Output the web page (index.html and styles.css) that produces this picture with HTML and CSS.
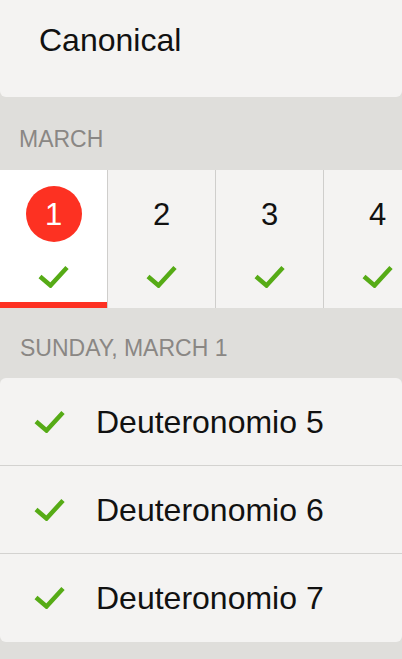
FILE: index.html
```html
<!DOCTYPE html>
<html lang="en">
<head>
    <meta charset="UTF-8">
    <meta name="viewport" content="width=device-width, initial-scale=1.0">
    <title>Reading Plan</title>
    <link rel="stylesheet" href="styles.css">
</head>
<body>
    <div class="plan-title">Canonical</div>

    <div class="section-head">MARCH</div>

    <div class="day-strip">
        <div class="day selected">
            <div class="day-num">1</div>
            <svg class="check" viewBox="0 0 31 23"><path d="M2 11.5 L12.5 20.5 L29 2.5"/></svg>
        </div>
        <div class="day">
            <div class="day-num">2</div>
            <svg class="check" viewBox="0 0 31 23"><path d="M2 11.5 L12.5 20.5 L29 2.5"/></svg>
        </div>
        <div class="day">
            <div class="day-num">3</div>
            <svg class="check" viewBox="0 0 31 23"><path d="M2 11.5 L12.5 20.5 L29 2.5"/></svg>
        </div>
        <div class="day">
            <div class="day-num">4</div>
            <svg class="check" viewBox="0 0 31 23"><path d="M2 11.5 L12.5 20.5 L29 2.5"/></svg>
        </div>
    </div>

    <div class="section-head day-head">SUNDAY, MARCH 1</div>

    <div class="reading-list">
        <div class="reading">
            <svg class="check" viewBox="0 0 31 23"><path d="M2 11.5 L12.5 20.5 L29 2.5"/></svg>
            <span>Deuteronomio 5</span>
        </div>
        <div class="reading">
            <svg class="check" viewBox="0 0 31 23"><path d="M2 11.5 L12.5 20.5 L29 2.5"/></svg>
            <span>Deuteronomio 6</span>
        </div>
        <div class="reading">
            <svg class="check" viewBox="0 0 31 23"><path d="M2 11.5 L12.5 20.5 L29 2.5"/></svg>
            <span>Deuteronomio 7</span>
        </div>
    </div>
</body>
</html>
```

FILE: styles.css
```css
body {
 margin: 0;
 background-color: #dfdedb;
 font-family: "Liberation Sans", Arial, sans-serif;
 color: #111;
}

.plan-title {
 height: 97px;
 box-sizing: border-box;
 padding: 22px 0 0 39px;
 font-size: 32px;
 line-height: 36px;
 background-color: #f4f3f2;
 border-radius: 0 0 6px 6px;
}

.section-head {
 padding: 28px 0 17px 19px;
 font-size: 23px;
 line-height: 28px;
 color: #8a8784;
}

.day-head {
 padding: 26px 0 16px 20px;
}

/* horizontal day picker */
.day-strip {
 display: flex;
 height: 138px;
 overflow: hidden;
}

.day {
 flex: 0 0 108px;
 display: flex;
 flex-direction: column;
 align-items: center;
 padding-top: 16px;
 box-sizing: border-box;
 background-color: #f4f3f2;
 border-right: 1px solid #cfcecc;
}

.day.selected {
 background-color: #fff;
 box-shadow: inset 0 -6px 0 #fd3122;
}

.day-num {
 width: 56px;
 height: 56px;
 border-radius: 50%;
 display: flex;
 align-items: center;
 justify-content: center;
 font-size: 31px;
 line-height: 1;
}

.day.selected .day-num {
 background-color: #fd3122;
 color: #fff;
}

.check {
 width: 31px;
 height: 23px;
 fill: none;
 stroke: #56ab16;
 stroke-width: 4.5;
}

.day .check {
 margin-top: 23px;
}

.reading-list {
 background-color: #f4f3f2;
 border-radius: 6px;
}

.reading {
 height: 88px;
 box-sizing: border-box;
 display: flex;
 align-items: center;
 padding-left: 34px;
 font-size: 32px;
 line-height: 36px;
 border-bottom: 1px solid #d3d2d0;
}

.reading:last-child {
 border-bottom: none;
}

.reading .check {
 margin-right: 31px;
 margin-top: -1px;
}
```
